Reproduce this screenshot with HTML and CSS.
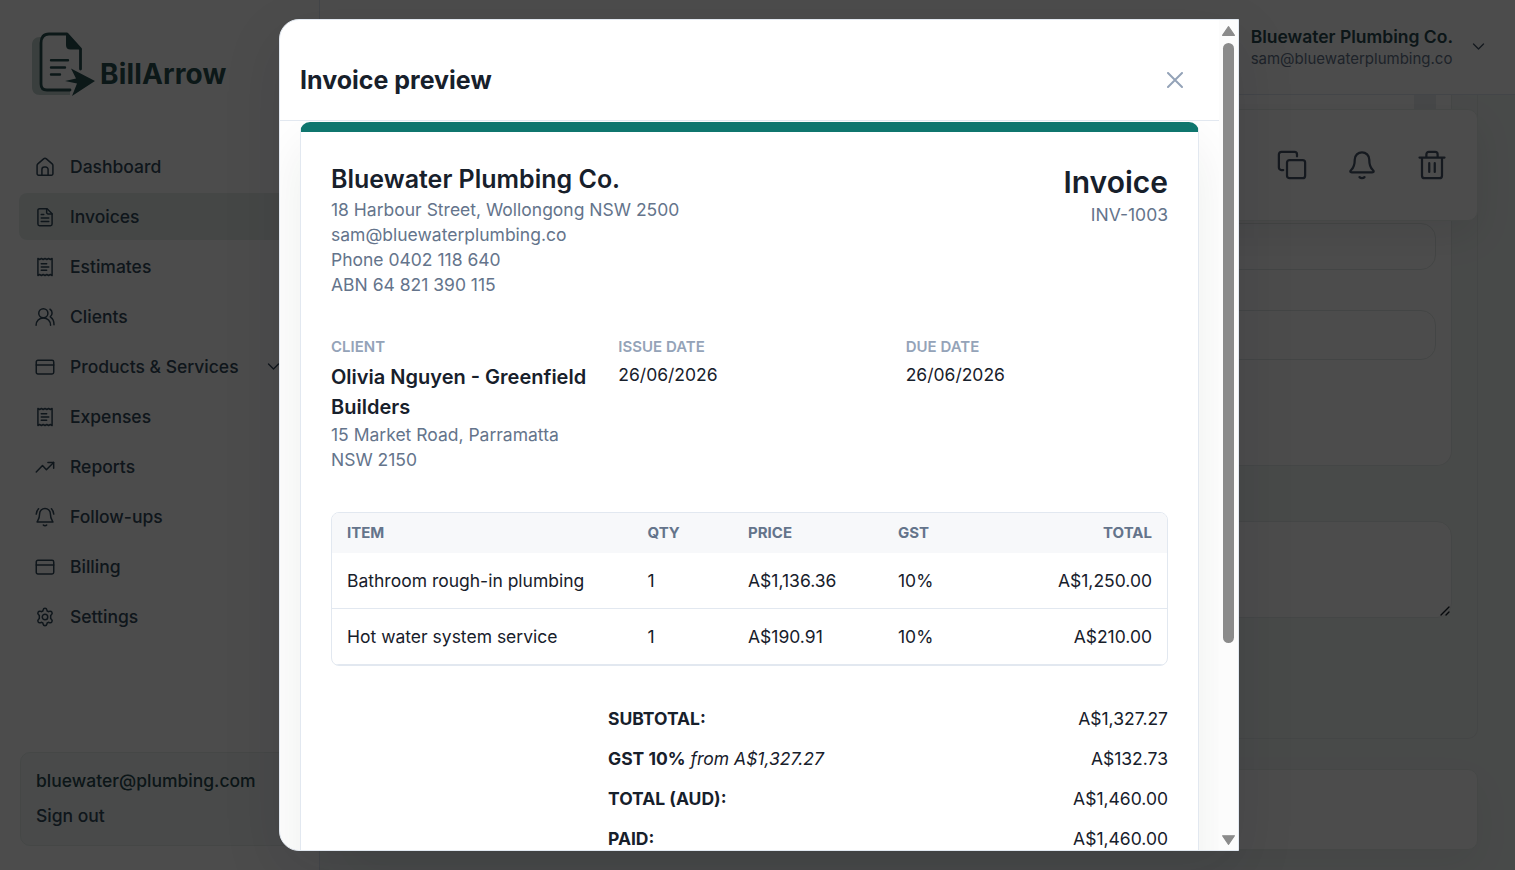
FILE: index.html
```html
<!DOCTYPE html>
<html lang="en">
<head>
  <meta charset="utf-8">
  <title>BillArrow - Invoices</title>
  <link rel="stylesheet" href="styles.css">
</head>
<body>
  <svg class="sprite" xmlns="http://www.w3.org/2000/svg">
    <symbol id="i-home" viewBox="0 0 24 24"><path d="M2.5 10.2a2.5 2.5 0 0 1 .9-1.9l6.9-6a2.6 2.6 0 0 1 3.4 0l6.9 6a2.5 2.5 0 0 1 .9 1.9V20a1.8 1.8 0 0 1-1.8 1.8H4.3A1.8 1.8 0 0 1 2.500 20Z"/><path d="M8.300 21.800V15a3 3 0 0 1 3-3h1.400a3 3 0 0 1 3 3v6.800"/></symbol>
    <symbol id="i-invoice" viewBox="0 0 24 24"><path d="M14.500 2H5.500A2 2 0 0 0 3.500 4v16.500a2 2 0 0 0 2 2h13a2 2 0 0 0 2-2V8Z"/><path d="M14 2v4.500A1.800 1.800 0 0 0 15.800 8.300h4.700M7.500 9h3M7.500 13.300h9M7.500 17.500h9"/></symbol>
    <symbol id="i-receipt" viewBox="0 0 24 24"><path d="M3.500 1.800v20.400l2-1.200 2.200 1.200 2.100-1.200 2.200 1.200 2.200-1.200 2.100 1.200 2.200-1.200 2 1.200V1.800l-2 1.200-2.200-1.200L14.200 3 12 1.800 9.800 3 7.700 1.800 5.500 3Z"/><path d="M7.500 8h6.500M7.500 12h9M7.500 16h6.500"/></symbol>
    <symbol id="i-users" viewBox="0 0 24 24"><circle cx="10" cy="7.500" r="5.500"/><path d="M1.300 21.800c0-4.800 3.700-8.700 8.700-8.700s8.700 3.900 8.700 8.700M18 2.700a5.500 5.500 0 0 1 .3 9M19 12.500c2.400 1.600 3.800 5 3.800 8.800"/></symbol>
    <symbol id="i-card" viewBox="0 0 24 24"><rect x="1.500" y="4" width="21" height="16.300" rx="2"/><path d="M1.500 9.500h21"/></symbol>
    <symbol id="i-trend" viewBox="0 0 24 24"><path d="M1.500 18 9 10.300l4.700 4.900 8.600-8.700"/><path d="M15.500 6.500h6.900v6.900"/></symbol>
    <symbol id="i-bell-ring" viewBox="0 0 24 24"><path d="M12 1.800a6.500 6.500 0 0 1 6.500 6.500c0 6 2.500 7.800 3 9.700H2.500c.5-1.900 3-3.700 3-9.700A6.500 6.500 0 0 1 12 1.800Z"/><path d="M10 21.700c1 1.100 3 1.100 4 0M4.300 2.200C2.700 3.800 1.700 6 1.500 8.500M19.700 2.200c1.600 1.600 2.600 3.800 2.800 6.300"/></symbol>
    <symbol id="i-gear" viewBox="0 0 24 24"><circle cx="12" cy="12" r="3.300"/><path d="M9.700 3.600c.6-2.700 4-2.700 4.600 0l.3 1.200 1.400.8 1.500-.4c2.400-.7 4.100 2.100 2.400 3.900l-1.100 1.200v3.400l1.100 1.200c1.700 1.800 0 4.600-2.400 3.900l-1.500-.4-1.400.8-.3 1.200c-.6 2.700-4 2.700-4.600 0l-.3-1.200-1.400-.8-1.500.4c-2.400.7-4.100-2.100-2.400-3.900l1.100-1.200v-3.400L4.100 9.100C2.400 7.300 4.100 4.500 6.500 5.200l1.500.4 1.400-.8Z"/></symbol>
    <symbol id="i-down" viewBox="0 0 24 24"><path d="m4 8 8 8 8-8"/></symbol>
    <symbol id="i-copy" viewBox="0 0 24 24"><rect x="8" y="8" width="14.500" height="14.500" rx="2"/><path d="M5 16H3.500a2 2 0 0 1-2-2V3.500a2 2 0 0 1 2-2H14a2 2 0 0 1 2 2V5"/></symbol>
    <symbol id="i-bell" viewBox="0 0 24 24"><path d="M12 1.800a5.800 5.800 0 0 1 5.800 5.800c0 5 1 6.600 2.700 8.200 1.400 1.300 1 2-.3 2H3.800c-1.300 0-1.700-.7-.3-2 1.700-1.600 2.700-3.200 2.700-8.200A5.800 5.800 0 0 1 12 1.800Z"/><path d="M10 21.700c1 1.100 3 1.100 4 0"/></symbol>
    <symbol id="i-trash" viewBox="0 0 24 24"><path d="M2 6h20M4 6v14.500a2 2 0 0 0 2 2h12a2 2 0 0 0 2-2V6M7.500 6V3.500a2 2 0 0 1 2-2h5a2 2 0 0 1 2 2V6M9.800 10.500v7M14.200 10.500v7"/></symbol>
  </svg>

  <div class="app">
    <aside class="sidebar">
      <div class="logo">
        <svg class="logo-mark" viewBox="0 0 66 66">
          <path class="logo-shade" d="M9 6C4 6 1 9 1 14v42c0 5 3 8 8 8h30V54H14V6Z"/>
          <path class="logo-sheet" d="M39 59H16q-6 0-6-6V12q0-9 8-9h18L49.500 18v20"/>
          <path class="logo-fill" d="M35 2v12q0 4.500 4.500 4.500H51Z"/>
          <path class="logo-lines" d="M20 29.300h17M20 36.500h14M20 43.500h9"/>
          <path class="logo-arrow" d="m40 37.500 24 12.500-23 15 5-12.500-12-2.500 11-2.500Z"/>
        </svg>
        <span class="logo-text">BillArrow</span>
      </div>
      <nav class="nav">
        <a class="nav-item"><svg class="icon"><use href="#i-home"/></svg>Dashboard</a>
        <a class="nav-item active"><svg class="icon"><use href="#i-invoice"/></svg>Invoices</a>
        <a class="nav-item"><svg class="icon"><use href="#i-receipt"/></svg>Estimates</a>
        <a class="nav-item"><svg class="icon"><use href="#i-users"/></svg>Clients</a>
        <a class="nav-item"><svg class="icon"><use href="#i-card"/></svg>Products &amp; Services<svg class="icon chevron"><use href="#i-down"/></svg></a>
        <a class="nav-item"><svg class="icon"><use href="#i-receipt"/></svg>Expenses</a>
        <a class="nav-item"><svg class="icon"><use href="#i-trend"/></svg>Reports</a>
        <a class="nav-item"><svg class="icon"><use href="#i-bell-ring"/></svg>Follow-ups</a>
        <a class="nav-item"><svg class="icon"><use href="#i-card"/></svg>Billing</a>
        <a class="nav-item"><svg class="icon"><use href="#i-gear"/></svg>Settings</a>
      </nav>
      <div class="account">
        <div class="account-email">bluewater@plumbing.com</div>
        <div class="account-out">Sign out</div>
      </div>
    </aside>

    <div class="main">
      <header class="topbar">
        <div class="company">
          <div class="company-name">Bluewater Plumbing Co.</div>
          <div class="company-email">sam@bluewaterplumbing.co</div>
        </div>
        <svg class="icon chevron"><use href="#i-down"/></svg>
      </header>
      <div class="content">
        <div class="toolbar">
          <svg class="icon-lg"><use href="#i-copy"/></svg>
          <svg class="icon-lg"><use href="#i-bell"/></svg>
          <svg class="icon-lg"><use href="#i-trash"/></svg>
        </div>
        <section class="form-card">
          <div class="form-panel">
            <div class="panel-edge"></div>
            <div class="field"></div>
            <div class="field tall"></div>
          </div>
          <div class="notes">
            <svg class="resize" viewBox="0 0 10 10"><path d="M1 9 9 1M6 9l3-3"/></svg>
          </div>
        </section>
        <section class="bottom-card"></section>
      </div>
    </div>
  </div>

  <div class="overlay">
    <div class="modal">
      <div class="modal-scroll">
        <div class="modal-head">
          <h2>Invoice preview</h2>
          <svg class="close" viewBox="0 0 16 16"><path d="m1 1 14 14M15 1 1 15"/></svg>
        </div>
        <div class="modal-body">
          <article class="invoice">
            <div class="invoice-top">
              <div>
                <h3>Bluewater Plumbing Co.</h3>
                <p>18 Harbour Street, Wollongong NSW 2500</p>
                <p>sam@bluewaterplumbing.co</p>
                <p>Phone 0402 118 640</p>
                <p>ABN 64 821 390 115</p>
              </div>
              <div class="invoice-no">
                <h1>Invoice</h1>
                <p>INV-1003</p>
              </div>
            </div>
            <div class="meta">
              <div>
                <div class="label">CLIENT</div>
                <div class="client">Olivia Nguyen - Greenfield Builders</div>
                <p>15 Market Road, Parramatta<br>NSW 2150</p>
              </div>
              <div>
                <div class="label">ISSUE DATE</div>
                <div class="date">26/06/2026</div>
              </div>
              <div>
                <div class="label">DUE DATE</div>
                <div class="date">26/06/2026</div>
              </div>
            </div>
            <div class="items">
              <div class="row head"><span>ITEM</span><span>QTY</span><span>PRICE</span><span>GST</span><span>TOTAL</span></div>
              <div class="row"><span>Bathroom rough-in plumbing</span><span>1</span><span>A$1,136.36</span><span>10%</span><span>A$1,250.00</span></div>
              <div class="row"><span>Hot water system service</span><span>1</span><span>A$190.91</span><span>10%</span><span>A$210.00</span></div>
            </div>
            <div class="totals">
              <div><b>SUBTOTAL:</b><span>A$1,327.27</span></div>
              <div><span><b>GST 10%</b> <i>from A$1,327.27</i></span><span>A$132.73</span></div>
              <div><b>TOTAL (AUD):</b><span>A$1,460.00</span></div>
              <div><b>PAID:</b><span>A$1,460.00</span></div>
            </div>
          </article>
        </div>
      </div>
      <div class="scrollbar">
        <svg class="arrow" viewBox="0 0 12 9"><path d="M6 .5 11.500 8.500H.5Z"/></svg>
        <div class="thumb"></div>
        <svg class="arrow" viewBox="0 0 12 9"><path d="M6 8.500 11.500.5H.5Z"/></svg>
      </div>
    </div>
  </div>
</body>
</html>
```
FILE: styles.css
```css
*, *::before, *::after {
  box-sizing: border-box;
}

body {
  margin: 0;
  height: 870px;
  overflow: hidden;
  font-family: Inter, "Liberation Sans", sans-serif;
  font-size: 17.5px;
  line-height: 25px;
  color: #17202b;
}

h1, h2, h3, p {
  margin: 0;
}

svg {
  fill: none;
  stroke: currentColor;
  stroke-linecap: round;
  stroke-linejoin: round;
}

.sprite {
  display: none;
}

.icon {
  width: 20px;
  height: 20px;
  flex: none;
  stroke-width: 1.8;
}

.icon-lg {
  width: 30px;
  height: 30px;
  stroke-width: 1.8;
}

.chevron {
  width: 15px;
  height: 15px;
  stroke-width: 2.2;
}

/* page behind the modal */
.app {
  display: flex;
  height: 870px;
  background: #f2f7f5;
}

.sidebar {
  width: 320px;
  flex: none;
  display: flex;
  flex-direction: column;
  padding: 31px 19px 24px;
  background: #fff;
  border-right: 1px solid #e2e8f0;
}

.logo {
  display: flex;
  align-items: flex-start;
  height: 112px;
  padding-left: 12px;
  color: #285052;
}

.logo-mark {
  width: 66px;
  height: 66px;
  flex: none;
}

.logo-shade {
  fill: #c3d3cf;
  stroke: none;
}

.logo-sheet {
  fill: #fff;
  stroke-width: 2.8;
}

.logo-fill,
.logo-arrow {
  fill: currentColor;
  stroke: none;
}

.logo-lines {
  stroke-width: 2.4;
}

.logo-text {
  margin: 25px 0 0 3px;
  font-size: 28px;
  line-height: 36px;
  font-weight: 700;
  letter-spacing: 0.15px;
}

.nav {
  display: flex;
  flex-direction: column;
  gap: 3px;
}

.nav-item {
  display: flex;
  align-items: center;
  gap: 15px;
  height: 47px;
  padding: 0 15px 0 16px;
  border-radius: 8px;
  font-weight: 500;
  color: #334a5c;
}

.nav-item.active {
  background: #e6efec;
}

.nav-item .chevron {
  margin-left: auto;
}

.nav-item:nth-child(5) {
  padding-right: 19px;
}

.account {
  margin: auto 0 0 1px;
  height: 94px;
  padding: 15px;
  border: 1px solid #e6efec;
  border-radius: 10px;
  background: #f4f9f7;
  font-weight: 500;
  color: #2b4a52;
}

.account-out {
  margin-top: 10px;
  color: #334a5c;
}

.main {
  flex: 1;
  display: flex;
  flex-direction: column;
}

.topbar {
  height: 95px;
  flex: none;
  display: flex;
  justify-content: flex-end;
  padding: 25px 29px 0 0;
  border-bottom: 1px solid #e2e8f0;
  background: #fff;
}

.topbar .chevron {
  margin: 14px 0 0 18px;
  color: #475569;
}

.company-name {
  font-weight: 600;
  line-height: 24px;
  color: #2b4a52;
}

.company-email {
  font-size: 15px;
  line-height: 20px;
  color: #64748b;
}

.content {
  position: relative;
  flex: 1;
  overflow: hidden;
  padding: 0 37px 0 30px;
}

.toolbar {
  position: absolute;
  top: 14px;
  left: 30px;
  right: 37px;
  height: 112px;
  display: flex;
  align-items: center;
  justify-content: flex-end;
  gap: 40px;
  padding-right: 30px;
  border: 1px solid #e8eeec;
  border-radius: 10px;
  background: #fff;
  box-shadow: 0 15px 38px rgba(15, 23, 42, 0.08);
  color: #475569;
}

.form-card {
  height: 644px;
  padding: 0 25px;
  border: 1px solid #e5ebe9;
  border-top: 0;
  border-radius: 0 0 10px 10px;
}

.form-panel {
  height: 371px;
  padding: 0 15px;
  border: 1px solid #e5ebe9;
  border-top: 0;
  border-radius: 0 0 15px 15px;
  background: #fff;
}

/* button that sits half under the toolbar */
.panel-edge {
  width: 22px;
  height: 15px;
  margin: 0 0 113px auto;
  background: #ebeff2;
}

.field {
  height: 47px;
  margin-bottom: 40px;
  border: 1px solid #e2e8e6;
  border-radius: 15px;
}

.field.tall {
  height: 50px;
}

.notes {
  display: flex;
  align-items: flex-end;
  justify-content: flex-end;
  height: 97px;
  margin-top: 55px;
  padding: 1px;
  border: 1px solid #e5ebe9;
  border-radius: 15px;
  background: #fff;
}

.resize {
  width: 10px;
  height: 10px;
  stroke-width: 1.4;
}

.bottom-card {
  height: 81px;
  margin-top: 30px;
  border: 1px solid #e8eeec;
  border-radius: 10px;
  background: #fff;
  box-shadow: 0 15px 38px rgba(15, 23, 42, 0.05);
}

/* modal */
.overlay {
  position: absolute;
  inset: 0;
  display: flex;
  padding: 19px 0 0 279px;
  background: rgba(0, 0, 0, 0.7);
}

.modal {
  display: flex;
  width: 960px;
  height: 832px;
  overflow: hidden;
  border: 1px solid #e2e8f0;
  border-radius: 20px 0 0 20px;
  background: #fff;
  box-shadow: 0 20px 60px rgba(15, 23, 42, 0.1);
}

.modal-scroll {
  display: flex;
  flex-direction: column;
  width: 939px;
  overflow: hidden;
}

.modal-head {
  display: flex;
  align-items: center;
  justify-content: space-between;
  height: 101px;
  flex: none;
  padding: 20px 36px 0 20px;
  border-bottom: 1px solid #e2e8f0;
}

.modal-head h2 {
  font-size: 25px;
  line-height: 35px;
  font-weight: 700;
}

.close {
  width: 16px;
  height: 16px;
  stroke: #94a3b8;
  stroke-width: 2;
}

.modal-body {
  flex: 1;
  overflow: hidden;
  padding: 1px 20px 0;
}

.invoice {
  height: 1000px;
  padding: 30px;
  border: 1px solid #e2e8f0;
  border-top: 10px solid #0f766e;
  border-radius: 10px;
  background: #fff;
  box-shadow: 0 22px 56px rgba(23, 32, 28, 0.08);
}

.invoice p {
  color: #64748b;
}

.invoice-top {
  display: flex;
  justify-content: space-between;
}

.invoice-top h3 {
  font-size: 25px;
  line-height: 35px;
  font-weight: 600;
}

.invoice-no {
  text-align: right;
}

.invoice-no h1 {
  margin-top: 1px;
  font-size: 30px;
  line-height: 38px;
  font-weight: 600;
}

.invoice-no p {
  margin-top: 1px;
}

.meta {
  display: grid;
  grid-template-columns: repeat(3, 1fr);
  gap: 25px;
  margin-top: 40px;
}

.label {
  font-size: 15px;
  line-height: 20px;
  font-weight: 600;
  color: #94a3b8;
}

.client {
  margin-top: 5px;
  font-size: 20px;
  line-height: 30px;
  font-weight: 600;
}

.date {
  margin-top: 5px;
}

.items {
  margin-top: 40px;
  border: 1px solid #e2e8f0;
  border-radius: 8px;
  overflow: hidden;
}

.row {
  display: grid;
  grid-template-columns: 300.5px 100.5px 150px 100px 1fr;
  height: 56px;
  align-items: center;
  border-bottom: 1px solid #e2e8f0;
}

.row span {
  padding: 0 15px;
}

.row span:last-child {
  text-align: right;
}

.row.head {
  height: 40px;
  padding-bottom: 2px;
  border-bottom: 0;
  background: #f7f8fa;
  font-size: 15px;
  font-weight: 700;
  color: #64748b;
}

.totals {
  width: 560px;
  margin: 40px 0 0 auto;
}

.totals div {
  display: flex;
  justify-content: space-between;
  margin-bottom: 15px;
}

.totals b {
  font-weight: 700;
}

.scrollbar {
  display: flex;
  flex-direction: column;
  align-items: center;
  width: 19px;
  padding: 6px 0 5px;
  background: #fcfcfc;
}

.arrow {
  width: 13px;
  height: 10px;
  fill: #8b8b8b;
  stroke: #8b8b8b;
}

.thumb {
  width: 11px;
  height: 600px;
  margin: 7px 0 auto;
  border-radius: 6px;
  background: #8b8b8b;
}
```
